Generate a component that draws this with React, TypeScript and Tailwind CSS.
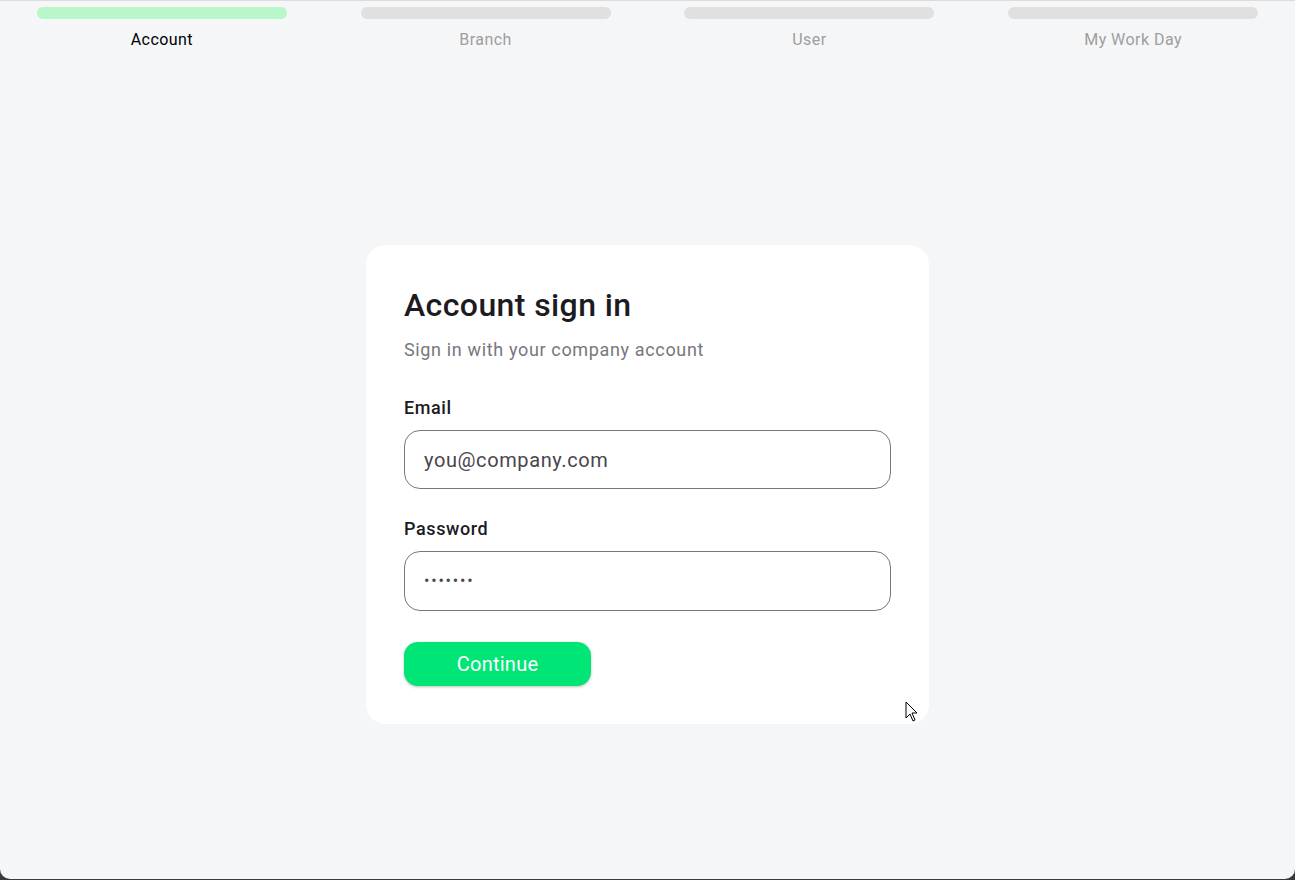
import React from "react";

const steps = ["Account", "Branch", "User", "My Work Day"];

export default function App() {
  return (
    <div className="w-[1295px] h-[880px] bg-[#3a3a3a] overflow-hidden" style={{ fontFamily: "Roboto, 'Liberation Sans', sans-serif" }}>
      <div className="relative h-[879px] bg-[#f5f6f8] rounded-b-[10px] border-t border-[#dcdcdc] flex flex-col">
        <div className="grid grid-cols-4 pt-[6px]">
          {steps.map((s, i) => (
            <div key={s} className="flex flex-col items-center">
              <div className={`h-[12px] w-[250px] rounded-full ${i === 0 ? "bg-[#b9f6ca]" : "bg-[#e0e0e0]"}`} />
              <div className={`mt-[11px] text-[16px] leading-[20px] tracking-[0.45px] ${i === 0 ? "text-black" : "text-[#9e9e9e]"}`}>{s}</div>
            </div>
          ))}
        </div>
        <div className="flex justify-center pt-[195px]">
          <div className="w-[563px] bg-white rounded-[20px] px-[38px] pt-[40px] pb-[38px]">
            <h1 className="text-[32px] leading-[40px] font-medium text-[#1c1b1f] tracking-[0.4px]">Account sign in</h1>
            <p className="mt-[13px] text-[18px] leading-[24px] text-[#79767d] tracking-[0.65px]">Sign in with your company account</p>
            <label className="block mt-[34px] text-[18px] leading-[24px] font-medium text-[#1c1b1f] tracking-[0.6px]">Email</label>
            <div className="mt-[10px] h-[59px] rounded-[16px] border border-[#79767d] flex items-center px-[19px] text-[20px] tracking-[0.6px] text-[#49454f]">
              you@company.com
            </div>
            <label className="block mt-[28px] text-[18px] leading-[24px] font-medium text-[#1c1b1f] tracking-[0.6px]">Password</label>
            <div className="mt-[10px] h-[60px] rounded-[16px] border border-[#79767d] flex items-center px-[19px] text-[16px] tracking-[1.8px] text-[#49454f]">
              •••••••
            </div>
            <button className="mt-[31px] w-[187px] h-[44px] rounded-[14px] bg-[#00e676] text-white text-[20px] tracking-[0.25px] shadow-[0_1px_3px_rgba(0,0,0,0.25)]">
              Continue
            </button>
          </div>
        </div>
        <svg className="absolute left-[905px] top-[700px]" width="16" height="24" viewBox="0 0 16 24">
          <path d="M1 1 L1 17 L5 13 L8 20 L10 19 L7 12 L12 12 Z" fill="white" stroke="black" strokeWidth="1" strokeLinejoin="round" />
        </svg>
      </div>
    </div>
  );
}
